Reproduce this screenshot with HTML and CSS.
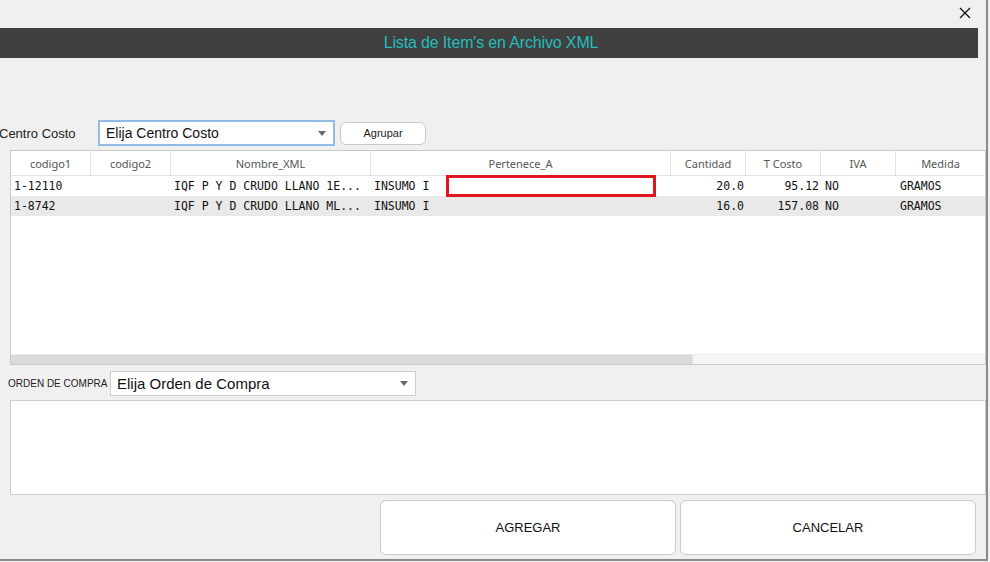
FILE: index.html
```html
<!DOCTYPE html>
<html lang="es">
<head>
    <meta charset="UTF-8">
    <title>Lista de Item's en Archivo XML</title>
    <link rel="stylesheet" href="styles.css">
</head>
<body>
    <div class="window">
        <div class="top-bar">
            <svg class="close-btn" width="12" height="12" viewBox="0 0 12 12">
                <path d="M1 1 L11 11 M11 1 L1 11" stroke="#111" stroke-width="1.3" fill="none"/>
            </svg>
        </div>
        <div class="title-bar">Lista de Item's en Archivo XML</div>

        <div class="centro-row">
            <label class="centro-label">Centro Costo</label>
            <div class="combo combo-focus combo-centro">
                <span>Elija Centro Costo</span>
                <span class="arrow"></span>
            </div>
            <button class="small-btn">Agrupar</button>
        </div>

        <div class="grid">
            <div class="grid-row grid-head">
                <div class="cell c1">codigo1</div>
                <div class="cell c2">codigo2</div>
                <div class="cell c3">Nombre_XML</div>
                <div class="cell c4">Pertenece_A</div>
                <div class="cell c5">Cantidad</div>
                <div class="cell c6">T Costo</div>
                <div class="cell c7">IVA</div>
                <div class="cell c8">Medida</div>
            </div>
            <div class="grid-body">
                <div class="grid-row data-row">
                    <div class="cell c1">1-12110</div>
                    <div class="cell c2"></div>
                    <div class="cell c3">IQF P Y D CRUDO LLANO 1E...</div>
                    <div class="cell c4">INSUMO I</div>
                    <div class="cell c5 num">20.0</div>
                    <div class="cell c6 num">95.12</div>
                    <div class="cell c7">NO</div>
                    <div class="cell c8">GRAMOS</div>
                </div>
                <div class="grid-row data-row alt">
                    <div class="cell c1">1-8742</div>
                    <div class="cell c2"></div>
                    <div class="cell c3">IQF P Y D CRUDO LLANO ML...</div>
                    <div class="cell c4">INSUMO I</div>
                    <div class="cell c5 num">16.0</div>
                    <div class="cell c6 num">157.08</div>
                    <div class="cell c7">NO</div>
                    <div class="cell c8">GRAMOS</div>
                </div>
            </div>
            <div class="hscroll">
                <div class="hscroll-thumb"></div>
            </div>
            <div class="cell-editor"></div>
        </div>

        <div class="orden-row">
            <label class="orden-label">ORDEN DE COMPRA</label>
            <div class="combo combo-orden">
                <span>Elija Orden de Compra</span>
                <span class="arrow"></span>
            </div>
        </div>

        <div class="notes"></div>

        <div class="actions">
            <button class="big-btn">AGREGAR</button>
            <button class="big-btn">CANCELAR</button>
        </div>
    </div>
</body>
</html>
```

FILE: styles.css
```css
body {
    margin: 0;
    background-color: #f0f0f0;
    font-family: 'Liberation Sans', Arial, sans-serif;
    overflow: hidden;
}

.window {
    width: 986px;
    height: 559px;
    border-right: 2px solid #8a8a8a;
    border-bottom: 2px solid #8a8a8a;
    display: flex;
    flex-direction: column;
    position: relative;
}

.top-bar {
    height: 28px;
    display: flex;
    justify-content: flex-end;
    align-items: center;
}

.close-btn {
    margin-right: 15px;
    margin-top: -2px;
}

.title-bar {
    height: 30px;
    margin-right: 8px;
    background-color: #404040;
    color: #22bdbd;
    font-family: 'Liberation Sans Narrow', 'Liberation Sans', sans-serif;
    font-size: 16px;
    letter-spacing: -0.15px;
    display: flex;
    align-items: center;
    justify-content: center;
    padding-left: 4px;
}

.centro-row {
    display: flex;
    align-items: center;
    margin-top: 62px;
    height: 26px;
}

.centro-label {
    width: 99px;
    font-size: 13px;
    color: #222;
    margin-left: -1px;
}

.combo {
    box-sizing: border-box;
    background-color: #fff;
    border: 1px solid #cfcfcf;
    display: flex;
    align-items: center;
    justify-content: space-between;
    padding: 0 6px 0 7px;
    font-size: 14px;
    color: #111;
}

.combo-focus {
    border: 2px solid #8fbbe6;
    padding-left: 6px;
}

.combo-centro {
    width: 237px;
    height: 26px;
}

.arrow {
    width: 0;
    height: 0;
    border-left: 4px solid transparent;
    border-right: 4px solid transparent;
    border-top: 5px solid #6a6a6a;
    margin-right: 1px;
}

.small-btn {
    margin-left: 5px;
    width: 86px;
    height: 23px;
    background-color: #fff;
    border: 1px solid #c8c8c8;
    border-radius: 6px;
    font-family: 'Liberation Sans', sans-serif;
    font-size: 11px;
    color: #222;
    padding: 0;
}

.grid {
    position: relative;
    margin: 4px 0 0 10px;
    height: 215px;
    box-sizing: border-box;
    background-color: #fff;
    border: 1px solid #c9c9c9;
    display: flex;
    flex-direction: column;
    overflow: hidden;
}

.grid-row {
    display: flex;
    flex-shrink: 0;
}

.grid-head {
    height: 24px;
    border-bottom: 1px solid #e2e2e2;
}

.grid-head .cell {
    border-right: 1px solid #e2e2e2;
    justify-content: center;
    font-family: 'Noto Sans', 'Open Sans', sans-serif;
    font-size: 11px;
    color: #555;
}

.cell {
    box-sizing: border-box;
    display: flex;
    align-items: center;
    white-space: nowrap;
    overflow: hidden;
    flex-shrink: 0;
}

.c1 { width: 80px; }
.c2 { width: 80px; }
.c3 { width: 200px; }
.c4 { width: 300px; }
.c5 { width: 75px; }
.c6 { width: 75px; }
.c7 { width: 75px; }
.c8 { width: 90px; }

.grid-body {
    flex: 1;
}

.data-row {
    height: 20px;
}

.data-row .cell {
    font-family: 'DejaVu Sans Mono', monospace;
    font-size: 11.5px;
    color: #111;
    padding-left: 3px;
}

.data-row .num {
    justify-content: flex-end;
    padding-left: 0;
    padding-right: 2px;
}

.data-row .c7,
.data-row .c8 {
    padding-left: 4px;
}

.alt {
    background-color: #e9e9e9;
}

.hscroll {
    height: 9px;
    background-color: #f5f5f5;
    border-top: 1px solid #ececec;
}

.hscroll-thumb {
    width: 681px;
    height: 100%;
    background-color: #dadada;
    border-right: 1px solid #e6e6e6;
}

.cell-editor {
    position: absolute;
    left: 435px;
    top: 24px;
    width: 210px;
    height: 22px;
    box-sizing: border-box;
    border: 3px solid #e3161f;
    background-color: #fff;
}

.orden-row {
    display: flex;
    align-items: center;
    margin-top: 5px;
    height: 26px;
}

.orden-label {
    width: 102px;
    margin-left: 8px;
    font-size: 10px;
    color: #222;
}

.combo-orden {
    width: 306px;
    height: 25px;
    font-size: 15px;
    padding-left: 6px;
    padding-right: 6px;
}

.notes {
    margin: 4px 0 0 10px;
    height: 95px;
    box-sizing: border-box;
    background-color: #fff;
    border: 1px solid #cdcdcd;
}

.actions {
    display: flex;
    gap: 4px;
    margin: 5px 0 0 380px;
}

.big-btn {
    width: 296px;
    height: 55px;
    background-color: #fff;
    border: 1px solid #cbcbcb;
    border-radius: 6px;
    font-family: 'Liberation Sans', sans-serif;
    font-size: 13px;
    color: #111;
    padding: 0;
}
```
